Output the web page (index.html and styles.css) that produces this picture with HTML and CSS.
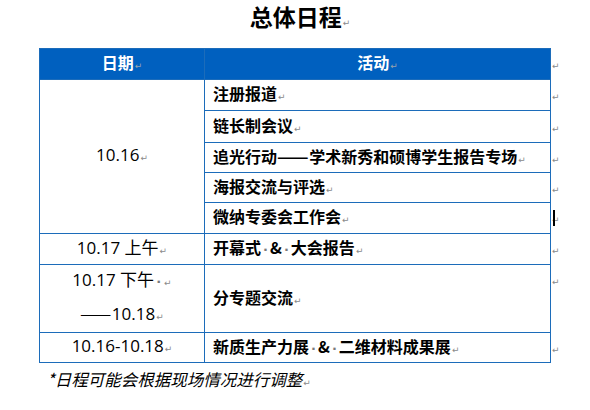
FILE: index.html
```html
<!DOCTYPE html>
<html lang="zh">
<head>
<meta charset="utf-8">
<link rel="stylesheet" href="styles.css">
</head>
<body>
<div class="page">
  <h1 class="title">总体日程<span class="pm pm-title">↵</span></h1>
  <table class="sched">
    <colgroup><col class="c1"><col class="c2"><col class="c3"></colgroup>
    <tr class="r-head">
      <th>日期<span class="pm">↵</span></th>
      <th>活动<span class="pm">↵</span></th>
      <td class="end"><span class="pm">↵</span></td>
    </tr>
    <tr class="r31">
      <td class="date" rowspan="5">10.16<span class="pm">↵</span></td>
      <td class="act">注册报道<span class="pm">↵</span></td>
      <td class="end"><span class="pm">↵</span></td>
    </tr>
    <tr class="r32">
      <td class="act">链长制会议<span class="pm">↵</span></td>
      <td class="end"><span class="pm">↵</span></td>
    </tr>
    <tr class="r30">
      <td class="act">追光行动<span class="dash">——</span>学术新秀和硕博学生报告专场<span class="pm">↵</span></td>
      <td class="end"><span class="pm">↵</span></td>
    </tr>
    <tr class="r30">
      <td class="act">海报交流与评选<span class="pm">↵</span></td>
      <td class="end"><span class="pm">↵</span></td>
    </tr>
    <tr class="r31">
      <td class="act">微纳专委会工作会<span class="pm">↵</span></td>
      <td class="end"><span class="cursor"></span><span class="pm">↵</span></td>
    </tr>
    <tr class="r31">
      <td class="date">10.17 上午<span class="pm">↵</span></td>
      <td class="act">开幕式<span class="sp">·</span>&amp;<span class="sp">·</span>大会报告<span class="pm">↵</span></td>
      <td class="end"><span class="pm">↵</span></td>
    </tr>
    <tr class="r61">
      <td class="date two"><span class="ln">10.17 下午<span class="sp">·</span><span class="pm">↵</span></span><span class="ln"><span class="dash">——</span>10.18<span class="pm">↵</span></span></td>
      <td class="act">分专题交流<span class="pm">↵</span></td>
      <td class="end top"><span class="pm">↵</span></td>
    </tr>
    <tr class="r30">
      <td class="date">10.16-10.18<span class="pm">↵</span></td>
      <td class="act">新质生产力展<span class="sp">·</span>&amp;<span class="sp">·</span>二维材料成果展<span class="pm">↵</span></td>
      <td class="end"><span class="pm">↵</span></td>
    </tr>
  </table>
  <p class="note">*日程可能会根据现场情况进行调整<span class="pm">↵</span></p>
</div>
</body>
</html>
```

FILE: styles.css
```css
html, body {
  margin: 0;
  padding: 0;
  background: #ffffff;
}
body {
  font-family: "Noto Sans CJK SC", "Noto Sans", sans-serif;
  color: #000;
}
.page {
  width: 590px;
  height: 410px;
  padding-left: 39px;
  box-sizing: border-box;
}
.title {
  margin: 0;
  width: 511px;
  height: 48px;
  box-sizing: border-box;
  text-align: center;
  font-size: 23px;
  line-height: 32px;
  font-weight: 700;
}
.pm {
  font-family: "DejaVu Sans", sans-serif;
  font-size: 9px;
  font-weight: 400;
  font-style: normal;
  color: #8a8a8a;
  margin-left: 1px;
}
.pm-title {
  margin-right: -11px;
}
.sp {
  display: inline-block;
  width: 9px;
  text-align: center;
  font-family: "DejaVu Sans", sans-serif;
  font-size: 13px;
  font-weight: 700;
  color: #7a7a7a;
}
.dash {
  display: inline-block;
  transform: scaleX(1.16);
  transform-origin: left center;
  margin-right: 5px;
}
.sched {
  border-collapse: collapse;
  table-layout: fixed;
  width: 524px;
}
.c1 { width: 165px; }
.c2 { width: 346px; }
.c3 { width: 13px; }
.sched th, .sched td.date, .sched td.act {
  border: 1px solid #1c6cba;
  padding: 0;
  vertical-align: middle;
}
.sched th {
  background: #0060bf;
  color: #fff;
  font-size: 16px;
  font-weight: 700;
  text-align: center;
  line-height: 20px;
}
.sched th .pm { color: #9aa3ad; }
.r-head { height: 31px; }
.r30 { height: 30px; }
.r31 { height: 31px; }
.r32 { height: 32px; }
.r61 { height: 61px; }
.date {
  text-align: center;
  font-family: "Open Sans", "Noto Sans CJK SC", sans-serif;
  font-size: 17px;
  line-height: 20px;
  font-weight: 400;
}
.date.two .ln {
  display: block;
  line-height: 30px;
}
.date .dash {
  font-family: "Noto Sans CJK SC", sans-serif;
  transform: scaleX(1.1);
  margin-right: 3px;
}
.act {
  padding-left: 8px !important;
  font-size: 16px;
  font-weight: 700;
  line-height: 20px;
  white-space: nowrap;
}
.end {
  border: none;
  padding: 0 0 0 1px;
  vertical-align: middle;
  line-height: 12px;
}
.end.top {
  vertical-align: top;
  padding-top: 7px;
}
.end .pm { margin-left: 0; }
.cursor {
  display: inline-block;
  width: 2px;
  height: 16px;
  background: #000;
  vertical-align: middle;
  margin-right: -2px;
  position: relative;
  left: 1px;
}
.note {
  margin: 0;
  padding-left: 8px;
  font-size: 16.5px;
  line-height: 32px;
  font-style: italic;
  color: #000;
}
.note .pm { font-style: normal; }
```
